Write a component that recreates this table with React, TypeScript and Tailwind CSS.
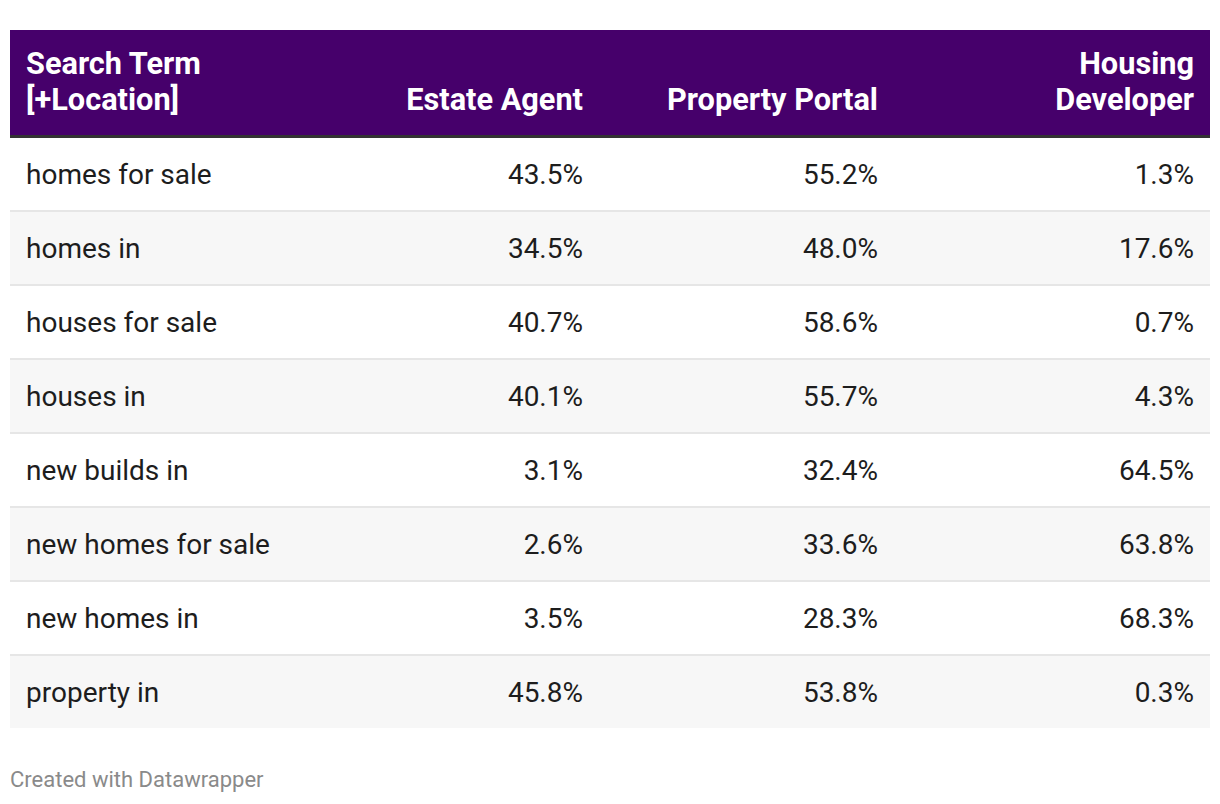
import React from "react";

const rows: [string, string, string, string][] = [
  ["homes for sale", "43.5%", "55.2%", "1.3%"],
  ["homes in", "34.5%", "48.0%", "17.6%"],
  ["houses for sale", "40.7%", "58.6%", "0.7%"],
  ["houses in", "40.1%", "55.7%", "4.3%"],
  ["new builds in", "3.1%", "32.4%", "64.5%"],
  ["new homes for sale", "2.6%", "33.6%", "63.8%"],
  ["new homes in", "3.5%", "28.3%", "68.3%"],
  ["property in", "45.8%", "53.8%", "0.3%"],
];

export default function App() {
  return (
    <div
      className="w-[1220px] h-[804px] bg-white pt-[30px] px-[10px]"
      style={{ fontFamily: "Roboto, 'Liberation Sans', sans-serif" }}
    >
      <div className="w-[1200px]">
        <div className="flex bg-[#46006b] text-white font-bold text-[30.7px] leading-[36px] border-b-[3px] border-[#333333] h-[108px] items-end pb-[17px]">
          <div className="w-[294px] pl-[16px]">
            Search Term
            <br />
            [+Location]
          </div>
          <div className="w-[295px] pr-[16px] text-right">Estate Agent</div>
          <div className="w-[295px] pr-[16px] text-right">Property Portal</div>
          <div className="w-[316px] pr-[16px] text-right">
            Housing
            <br />
            Developer
          </div>
        </div>
        {rows.map((r, i) => (
          <div
            key={i}
            className={`flex items-center pt-[2px] text-[28px] text-[#1d1d1d] ${
              i % 2 === 1 ? "bg-[#f7f7f7]" : "bg-white"
            } ${i < rows.length - 1 ? "h-[74px] border-b-2 border-[#e6e6e6]" : "h-[72px]"}`}
          >
            <div className="w-[294px] pl-[16px]">{r[0]}</div>
            <div className="w-[295px] pr-[16px] text-right">{r[1]}</div>
            <div className="w-[295px] pr-[16px] text-right">{r[2]}</div>
            <div className="w-[316px] pr-[16px] text-right">{r[3]}</div>
          </div>
        ))}
        <div className="mt-[35px] text-[22px] text-[#8a8a8a]">Created with Datawrapper</div>
      </div>
    </div>
  );
}
